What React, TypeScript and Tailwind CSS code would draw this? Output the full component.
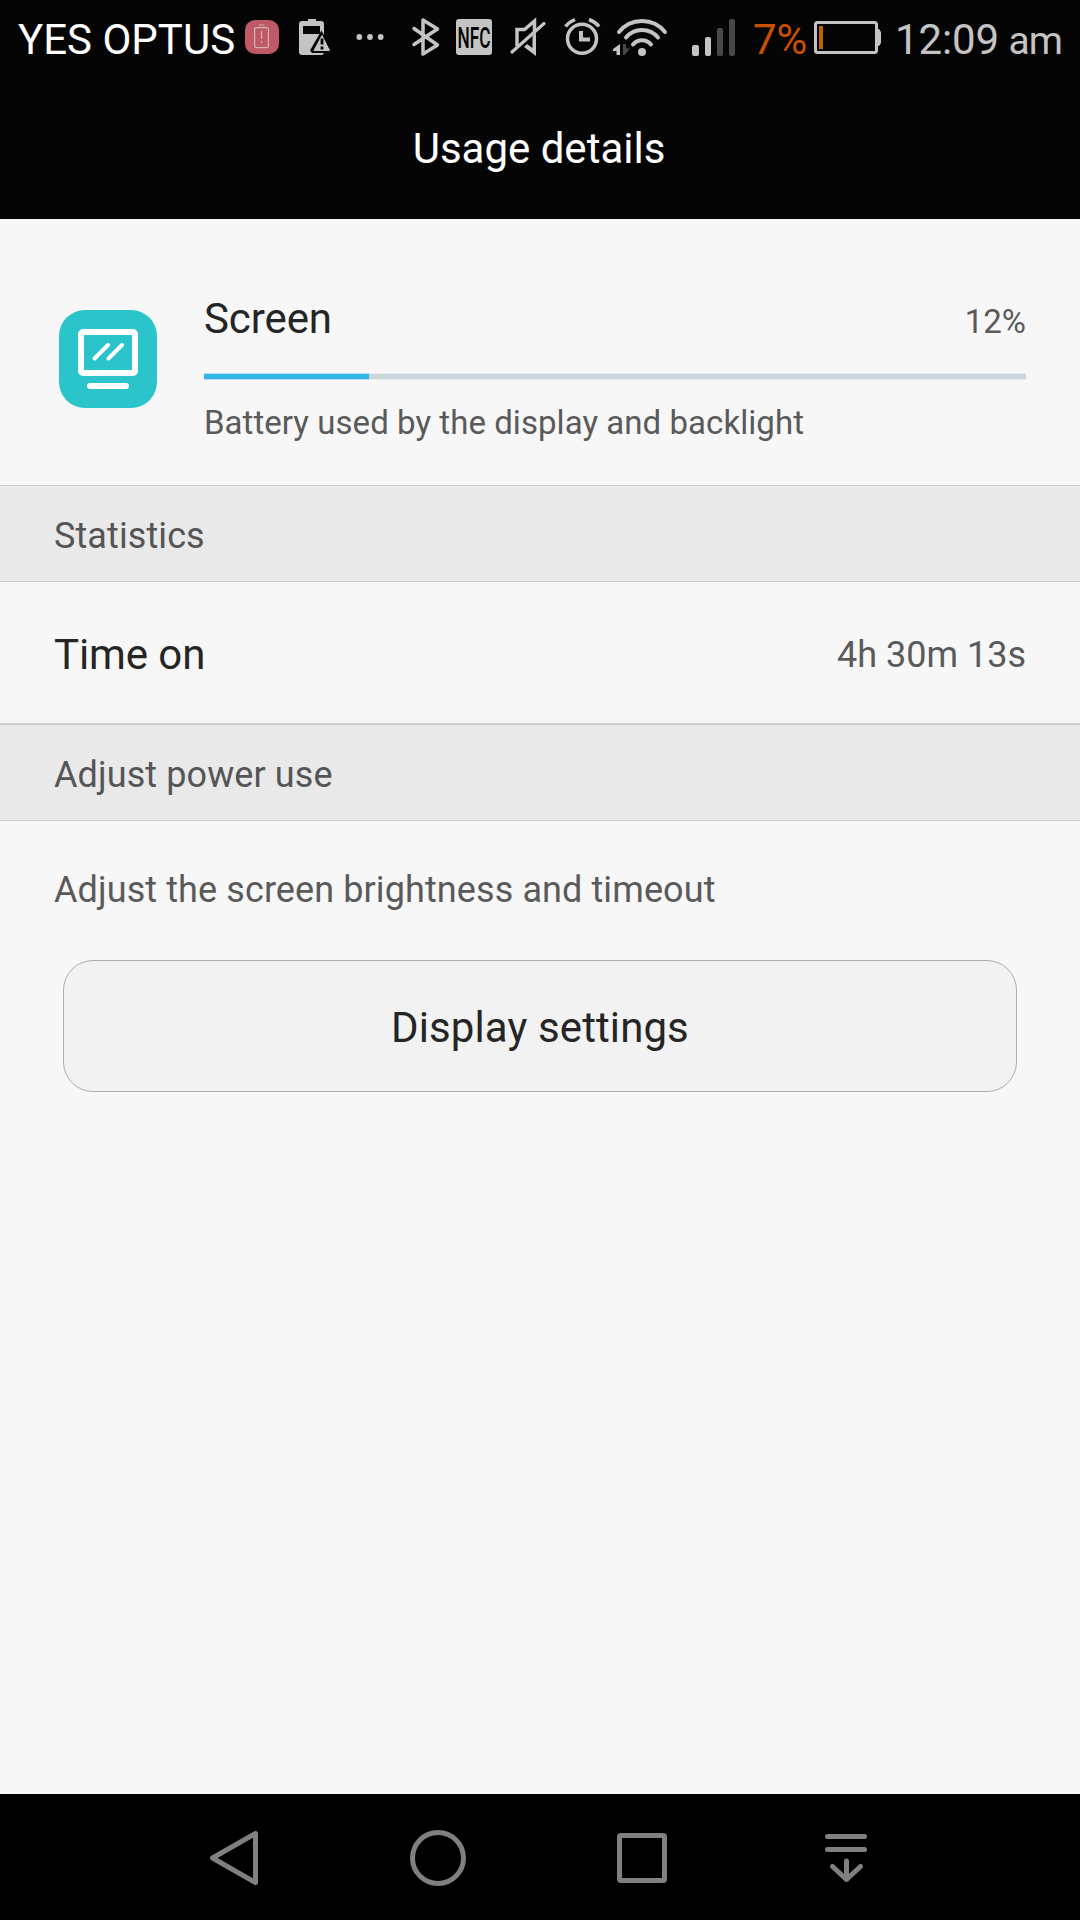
import type { ReactNode } from 'react'

const USAGE_PERCENT = 20.1

interface GlyphProps {
  width: number
  className?: string
  children: ReactNode
}

function StatusGlyph({ width, className, children }: GlyphProps) {
  return (
    <svg
      width={width}
      height={40}
      viewBox={`0 0 ${width} 40`}
      fill="none"
      className={`shrink-0 overflow-visible text-[#c4c4c4] ${className ?? ''}`}
    >
      {children}
    </svg>
  )
}

function LowBatteryIcon() {
  return (
    <StatusGlyph width={34} className="ml-[10px]">
      <rect x="0" y="3" width="34" height="34" rx="10" fill="#bf5965" />
      <g stroke="#d0b4b6" strokeWidth="1.2">
        <rect x="9.6" y="10.6" width="13.8" height="20" rx="1.6" />
        <path d="M14 8h5.5M16.5 14v8M16.5 24v2" />
      </g>
    </StatusGlyph>
  )
}

function BatteryWarningIcon() {
  return (
    <StatusGlyph width={34} className="ml-[20px]">
      <path d="M9 2h8v3H9z" fill="currentColor" />
      <path
        d="M3 4h19a3 3 0 0 1 3 3v28a3 3 0 0 1-3 3H3a3 3 0 0 1-3-3V7a3 3 0 0 1 3-3z"
        fill="currentColor"
      />
      <path d="M4 9h17v8H4z" fill="#050505" />
      <path d="M22.5 13.5 35 38H25v-2H13l-2-2.5z" fill="#050505" />
      <path
        d="M23 18.5 30.5 33.5H15z"
        fill="currentColor"
        stroke="currentColor"
        strokeLinejoin="round"
      />
      <path d="M23 21.5v6M23 29.5v3" stroke="#050505" strokeWidth="2.8" />
    </StatusGlyph>
  )
}

function MoreIcon() {
  return (
    <StatusGlyph width={28} className="ml-[23px]">
      <g fill="currentColor">
        <circle cx="3.3" cy="20" r="2.9" />
        <circle cx="14" cy="20" r="2.9" />
        <circle cx="24.7" cy="20" r="2.9" />
      </g>
    </StatusGlyph>
  )
}

function BluetoothIcon() {
  return (
    <StatusGlyph width={28} className="ml-[28px]">
      <path
        d="M2 11.5 25.5 28 11 37V3l14.5 9L2 27.5"
        stroke="currentColor"
        strokeWidth="3.5"
        strokeLinejoin="round"
        strokeLinecap="round"
      />
    </StatusGlyph>
  )
}

function NfcIcon() {
  return (
    <StatusGlyph width={36} className="ml-[16px]">
      <rect x="0" y="2" width="36" height="36" rx="3" fill="currentColor" />
      <text
        x="1.5"
        y="31"
        textLength="33"
        lengthAdjust="spacingAndGlyphs"
        fill="#050505"
        fontSize="29.5"
        fontWeight="500"
      >
        NFC
      </text>
    </StatusGlyph>
  )
}

function MutedIcon() {
  return (
    <StatusGlyph width={37} className="ml-[18px]">
      <path d="M7 29V12.5h7.5L24.5 4v11" stroke="currentColor" strokeWidth="3.5" />
      <path d="M22.5 19l3.5-3.5V39L14 30l3-3 5.5 4z" fill="currentColor" />
      <path d="M2 35 34 6.5" stroke="currentColor" strokeWidth="3.2" strokeLinecap="round" />
    </StatusGlyph>
  )
}

function AlarmIcon() {
  return (
    <StatusGlyph width={37} className="ml-[17px]">
      <g stroke="currentColor">
        <circle cx="18" cy="21.7" r="14.5" strokeWidth="3.5" />
        <path d="M17 14v8.5h9" strokeWidth="4" />
        <path d="M1.5 9.5Q5 5 11 2.5M25 2.5Q31.5 5 35 9.5" strokeWidth="3.5" />
      </g>
    </StatusGlyph>
  )
}

function WifiIcon() {
  return (
    <StatusGlyph width={55} className="ml-[12px]">
      <g stroke="currentColor" strokeWidth="4" strokeLinecap="round">
        <path d="M6 15a29.5 29.5 0 0 1 46 0" />
        <path d="M13 20.5a20.8 20.8 0 0 1 32 0" />
        <path d="M20 27.5a11.5 11.5 0 0 1 18 0" />
      </g>
      <circle cx="29" cy="35" r="4" fill="currentColor" />
      <path d="M7 27v11H3.5v-4H0v-2z" fill="currentColor" />
      <path d="M10 27h3v4.5h4L11.5 38H10z" fill="#484848" />
    </StatusGlyph>
  )
}

function SignalIcon() {
  return (
    <StatusGlyph width={43} className="ml-[24px]">
      <rect x="0" y="28" width="7" height="11" rx="2" fill="currentColor" />
      <rect x="13" y="20" width="6" height="19" rx="2" fill="currentColor" />
      <rect x="25" y="11" width="6" height="28" rx="2" fill="#484848" />
      <rect x="37" y="2" width="6" height="37" rx="2" fill="#484848" />
    </StatusGlyph>
  )
}

function BatteryIcon() {
  return (
    <StatusGlyph width={67} className="ml-[7px]">
      <rect x="1.5" y="5.5" width="61" height="30" rx="2" stroke="currentColor" strokeWidth="3" />
      <path d="M63 12h2l2 3v11l-2 3h-2z" fill="currentColor" />
      <path d="M5 9h4v23H5z" fill="#bd6500" />
    </StatusGlyph>
  )
}

function StatusBar() {
  return (
    <div className="flex h-[74px] items-center whitespace-nowrap pl-[18px] text-[42px] leading-[50px]">
      <span className="w-[217px] shrink-0 pt-[6px] text-white">YES OPTUS</span>
      <LowBatteryIcon />
      <BatteryWarningIcon />
      <MoreIcon />
      <BluetoothIcon />
      <NfcIcon />
      <MutedIcon />
      <AlarmIcon />
      <WifiIcon />
      <SignalIcon />
      <span className="ml-[18px] w-[54px] shrink-0 pt-[6px] text-[#c85000]">7%</span>
      <BatteryIcon />
      <span className="ml-[14px] pt-[6px] tracking-[-0.1px] text-[#c4c4c4]">
        12:09 <span className="-ml-px text-[39px] tracking-[-0.8px]">am</span>
      </span>
    </div>
  )
}

function ScreenIcon() {
  return (
    <svg width="98" height="98" viewBox="0 0 98 98" fill="none" className="shrink-0">
      <rect width="98" height="98" rx="26" fill="#2cc4cb" />
      <g stroke="#fff">
        <rect x="22" y="22" width="54" height="41" rx="2" strokeWidth="6" />
        <path d="M31 76h36" strokeWidth="6" strokeLinecap="round" />
        <path d="M35.5 48.5 49 35M49.5 48.5 63 35" strokeWidth="4" strokeLinecap="round" />
      </g>
    </svg>
  )
}

function UsageBar({ percent }: { percent: number }) {
  return (
    <div className="mt-[26px] flex h-[7px]">
      <div
        className="border-y border-[#b4e1f5] bg-[#33b5e5]"
        style={{ width: `${percent}%` }}
      />
      <div className="flex-1 border-y border-[#e6ebed] bg-[#ccd5da]" />
    </div>
  )
}

function SectionHeader({ title }: { title: string }) {
  return (
    <h2 className="h-[97px] border-y border-[#cdcdcd] bg-[#e9e9e9] pl-[54px] pt-px text-[36px] leading-[98px] tracking-[0.1px] text-[#555]">
      {title}
    </h2>
  )
}

function NavBar() {
  return (
    <nav className="flex h-[126px] shrink-0 bg-black pl-[200px] pt-[20px] text-[#808080]">
      <svg
        width="700"
        height="88"
        viewBox="200 1814 700 88"
        fill="none"
        stroke="currentColor"
        strokeWidth="5"
        strokeLinecap="round"
        strokeLinejoin="round"
      >
        <path d="M255.5 1833.5v49L212.5 1858z" />
        <circle cx="438" cy="1858" r="25.5" />
        <rect x="619.5" y="1835.5" width="45" height="45" rx="1.5" />
        <path d="M827.5 1836.5h37M827.5 1849.5h37M846.5 1861v18.5M832.5 1866.5l14 13 14-13" />
      </svg>
    </nav>
  )
}

export default function App() {
  return (
    <div className="flex h-[1920px] w-[1080px] flex-col overflow-hidden bg-[#f7f7f7] font-['Roboto',sans-serif]">
      <header className="h-[219px] shrink-0 bg-[#050505]">
        <StatusBar />
        <h1 className="pr-[2px] pt-[50px] text-center text-[42px] leading-[50px] text-white">
          Usage details
        </h1>
      </header>

      <main className="flex-1">
        <section className="flex h-[266px] pl-[59px] pr-[54px] pt-[75px]">
          <div className="pt-[16px]">
            <ScreenIcon />
          </div>
          <div className="ml-[47px] flex-1">
            <div className="flex items-baseline justify-between">
              <span className="text-[42px] leading-[50px] tracking-[-0.1px] text-[#252525]">
                Screen
              </span>
              <span className="text-[33px] leading-[50px] text-[#5a5a5a]">12%</span>
            </div>
            <UsageBar percent={USAGE_PERCENT} />
            <p className="mt-[23px] text-[33px] leading-[40px] tracking-[0.05px] text-[#5a5a5a]">
              Battery used by the display and backlight
            </p>
          </div>
        </section>

        <SectionHeader title="Statistics" />
        <div className="flex h-[141px] items-center justify-between pl-[54px] pr-[54px] pt-[4px]">
          <span className="text-[42px] leading-[50px] tracking-[-0.1px] text-[#252525]">
            Time on
          </span>
          <span className="text-[36px] leading-[50px] text-[#5a5a5a]">4h 30m 13s</span>
        </div>
        <div className="h-px bg-[#cdcdcd]" />

        <SectionHeader title="Adjust power use" />
        <p className="pl-[54px] pt-[44px] text-[36px] leading-[50px] tracking-[0.1px] text-[#5a5a5a]">
          Adjust the screen brightness and timeout
        </p>
        <button
          type="button"
          className="ml-[63px] mt-[45px] block h-[132px] w-[954px] rounded-[30px] border border-[#adadad] bg-[#f2f2f2] pt-[2px] text-[42px] tracking-[0.1px] text-[#252525]"
        >
          Display settings
        </button>
      </main>

      <NavBar />
    </div>
  )
}
